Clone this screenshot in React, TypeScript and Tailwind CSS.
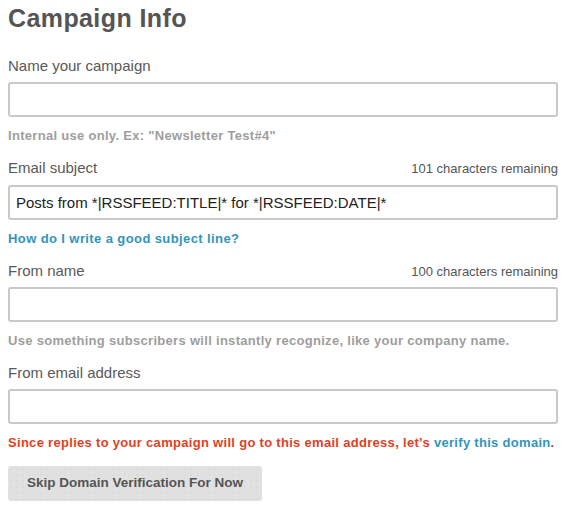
export default function App() {
  const labelCls = "block h-5 text-[15px] leading-5 text-[#595959]";
  const inputCls =
    "block w-full h-[35px] rounded-[3px] border-2 border-[#c9c9c9] bg-white px-[6px] text-[15px] text-[#222] outline-none";
  const helpCls = "mt-2.5 h-[18px] text-[13px] leading-[18px] font-bold tracking-[0.3px]";

  return (
    <div className="min-h-screen bg-white pt-1 pl-2 font-['Liberation_Sans',Arial,sans-serif]">
      <div className="w-[550px]">
        <h1 className="h-7 text-[25px] leading-7 font-bold tracking-[0.4px] text-[#555]">Campaign Info</h1>

        {/* Name */}
        <div className="mt-6">
          <label className={labelCls}>Name your campaign</label>
          <input className={`${inputCls} mt-1.5`} />
          <div className={`${helpCls} text-[#9e9e9e]`}>Internal use only. Ex: "Newsletter Test#4"</div>
        </div>

        {/* Subject */}
        <div className="mt-[13px]">
          <div className="flex items-baseline justify-between">
            <label className={labelCls}>Email subject</label>
            <span className="text-[13px] text-[#555]">101 characters remaining</span>
          </div>
          <input
            className={`${inputCls} mt-1.5`}
            defaultValue="Posts from *|RSSFEED:TITLE|* for *|RSSFEED:DATE|*"
          />
          <div className={`${helpCls} tracking-[0.4px]`}>
            <a className="text-[#3195bd]">How do I write a good subject line?</a>
          </div>
        </div>

        {/* From name */}
        <div className="mt-[13px]">
          <div className="flex items-baseline justify-between">
            <label className={labelCls}>From name</label>
            <span className="text-[13px] text-[#555]">100 characters remaining</span>
          </div>
          <input className={`${inputCls} mt-1.5`} />
          <div className={`${helpCls} text-[#9e9e9e]`}>
            Use something subscribers will instantly recognize, like your company name.
          </div>
        </div>

        {/* From email */}
        <div className="mt-[13px]">
          <label className={labelCls}>From email address</label>
          <input className={`${inputCls} mt-1.5`} />
          <div className={`${helpCls} text-[#e2401f]`}>
            Since replies to your campaign will go to this email address, let’s{" "}
            <a className="text-[#3195bd]">verify this domain</a>.
          </div>
        </div>

        <button className="mt-3.5 h-[35px] w-[254px] rounded-[3px] bg-[#e1e1e1] bg-[radial-gradient(#d3d3d3_0.6px,transparent_0.8px)] bg-[length:6px_6px] text-[13.5px] font-bold text-[#555]">
          Skip Domain Verification For Now
        </button>
      </div>
    </div>
  );
}
